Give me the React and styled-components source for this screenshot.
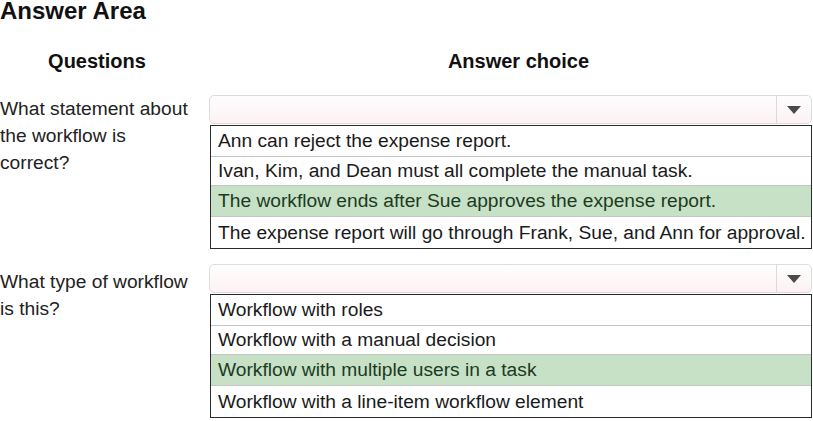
import React from 'react'
import styled, { createGlobalStyle } from 'styled-components'

const GlobalStyle = createGlobalStyle`
  body {
    margin: 0;
    background: #fff;
    font-family: "Liberation Sans", Arial, sans-serif;
    color: #1a1a1a;
  }
`

const Page = styled.div`
  width: 813px;
  height: 421px;
  overflow: hidden;
`

const Title = styled.h1`
  margin: 0;
  font-size: 24px;
  line-height: 22px;
  font-weight: bold;
  color: #111;
`

const Headings = styled.div`
  display: grid;
  grid-template-columns: 194px 1fr;
  margin-top: 28px;
  height: 22px;
`

const Heading = styled.div`
  text-align: center;
  font-size: 20px;
  line-height: 22px;
  font-weight: bold;
  color: #111;
  padding-left: ${(p) => p.shift || 0}px;
`

const QuestionRow = styled.div`
  display: grid;
  grid-template-columns: 209px 1fr;
  margin-top: ${(p) => p.top}px;
`

const Question = styled.div`
  font-size: 19.2px;
  line-height: 27px;
  color: #222;
  padding-top: ${(p) => p.pad || 0}px;
`

const Choice = styled.div`
  display: flex;
  flex-direction: column;
`

const Select = styled.div`
  height: 27px;
  margin-right: 1px;
  border: 1px solid #dcdcdc;
  border-radius: 5px;
  background: linear-gradient(#fefefe, #fdf1f3);
  display: flex;
  justify-content: flex-end;
`

const ArrowCell = styled.div`
  width: 34px;
  border-left: 1px solid #dadada;
  display: flex;
  align-items: center;
  justify-content: center;
`

const List = styled.div`
  margin-top: 1px;
  margin-left: 1px;
  margin-right: 1px;
  border: 1.5px solid #2a2a2a;
  display: flex;
  flex-direction: column;
`

const Option = styled.div`
  height: ${(p) => p.h}px;
  display: flex;
  align-items: center;
  padding-left: 7px;
  font-size: 19.2px;
  white-space: nowrap;
  background: ${(p) => (p.correct ? '#c6e1c6' : '#fff')};
  color: ${(p) => (p.correct ? '#1c3a1e' : '#1a1a1a')};
  border-top: ${(p) => (p.first ? 'none' : '1px solid #c4c4c4')};
`

const Arrow = () => (
  <svg width="14" height="8" viewBox="0 0 14 8">
    <polygon points="0,0 14,0 7,8" fill="#4a4a4a" />
  </svg>
)

const heights = [30, 28, 30, 31]

const Block = ({ top, pad, question, options }) => (
  <QuestionRow top={top}>
    <Question pad={pad}>{question}</Question>
    <Choice>
      <Select>
        <ArrowCell>
          <Arrow />
        </ArrowCell>
      </Select>
      <List>
        {options.map((o, i) => (
          <Option key={o.text} h={heights[i]} first={i === 0} correct={o.correct}>
            {o.text}
          </Option>
        ))}
      </List>
    </Choice>
  </QuestionRow>
)

export default function App() {
  return (
    <Page>
      <GlobalStyle />
      <Title>Answer Area</Title>
      <Headings>
        <Heading>Questions</Heading>
        <Heading shift={30}>Answer choice</Heading>
      </Headings>
      <Block
        top={23}
        question={
          <>
            What statement about
            <br />
            the workflow is
            <br />
            correct?
          </>
        }
        options={[
          { text: 'Ann can reject the expense report.' },
          { text: 'Ivan, Kim, and Dean must all complete the manual task.' },
          { text: 'The workflow ends after Sue approves the expense report.', correct: true },
          { text: 'The expense report will go through Frank, Sue, and Ann for approval.' },
        ]}
      />
      <Block
        top={15}
        pad={4}
        question={
          <>
            What type of workflow
            <br />
            is this?
          </>
        }
        options={[
          { text: 'Workflow with roles' },
          { text: 'Workflow with a manual decision' },
          { text: 'Workflow with multiple users in a task', correct: true },
          { text: 'Workflow with a line-item workflow element' },
        ]}
      />
    </Page>
  )
}
